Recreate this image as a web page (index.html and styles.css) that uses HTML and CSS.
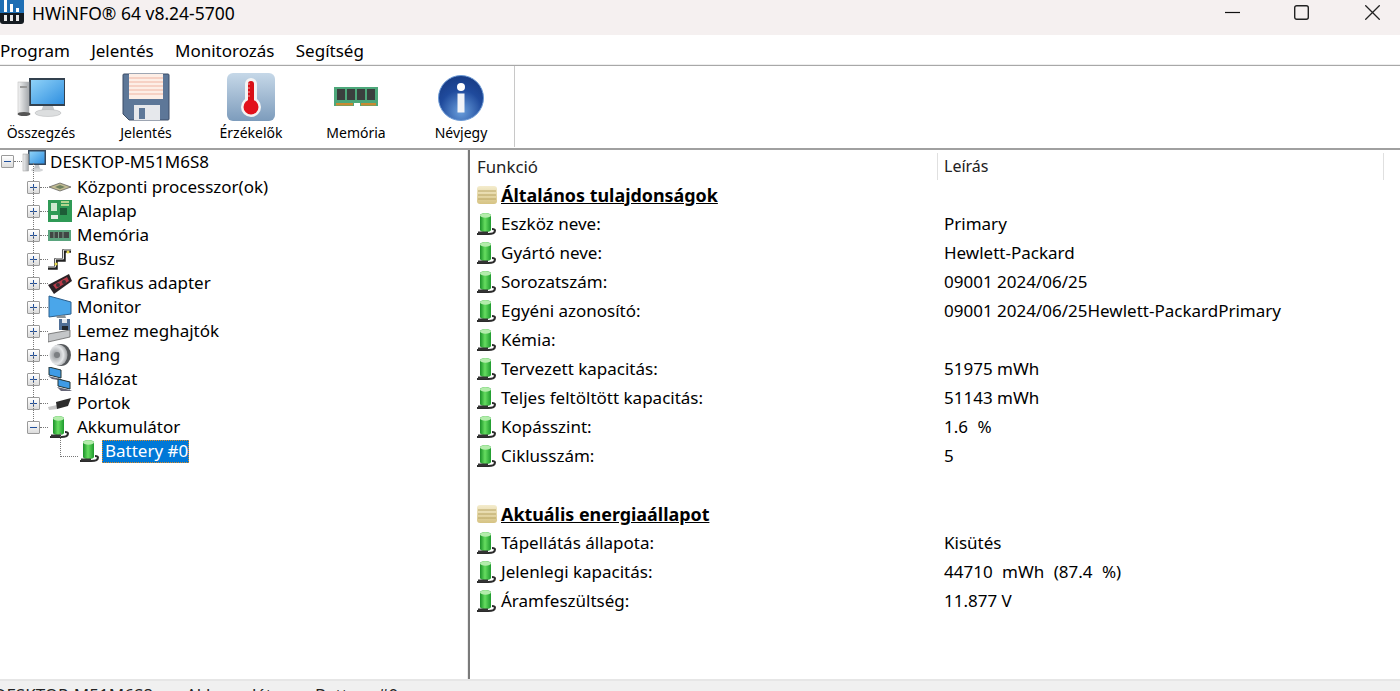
FILE: index.html
```html
<!DOCTYPE html>
<html lang="hu">
<head>
<meta charset="utf-8">
<title>HWiNFO 64</title>
<link rel="stylesheet" href="styles.css">
</head>
<body>
<svg class="defs" width="0" height="0" aria-hidden="true">
  <defs>
    <linearGradient id="gScreen" x1="0" y1="0" x2="1" y2="1"><stop offset="0" stop-color="#8fd2f8"/><stop offset="1" stop-color="#2f8fe0"/></linearGradient>
    <linearGradient id="gBat" x1="0" y1="0" x2="1" y2="0"><stop offset="0" stop-color="#1a9028"/><stop offset=".45" stop-color="#66dd60"/><stop offset="1" stop-color="#1e9a2e"/></linearGradient>
    <linearGradient id="gTower" x1="0" y1="0" x2="1" y2="0"><stop offset="0" stop-color="#f4f4f4"/><stop offset="1" stop-color="#a4a8ac"/></linearGradient>
    <linearGradient id="gTherm" x1="0" y1="0" x2="0" y2="1"><stop offset="0" stop-color="#c6d8e8"/><stop offset="1" stop-color="#7d9cbc"/></linearGradient>
    <radialGradient id="gInfo" cx=".5" cy=".8" r=".8"><stop offset="0" stop-color="#6a9fdc"/><stop offset=".6" stop-color="#1f4a9c"/><stop offset="1" stop-color="#173b84"/></radialGradient>
    <linearGradient id="gDoc" x1="0" y1="0" x2="0" y2="1"><stop offset="0" stop-color="#f4eccd"/><stop offset="1" stop-color="#d6c383"/></linearGradient>
    <radialGradient id="gCone" cx=".35" cy=".5" r=".7"><stop offset="0" stop-color="#8d9093"/><stop offset=".6" stop-color="#e4e6e8"/><stop offset="1" stop-color="#8a8d90"/></radialGradient>
    <symbol id="battery" viewBox="0 0 24 24">
      <path d="M5 3.500a5.500 2.500 0 0 1 11 0V18a5.500 2 0 0 1-11 0z" fill="url(#gBat)"/>
      <ellipse cx="10.500" cy="3.500" rx="5.500" ry="2.200" fill="#b4ecac"/>
      <path d="M2 22h11c4 0 7-.8 7-3.500 0-1-1-1.500-3-1.500" fill="none" stroke="#2b2b2b" stroke-width="2"/>
      <path d="M3 19.500h10v2.500H3z" fill="#333"/>
    </symbol>
    <symbol id="monitor" viewBox="0 0 24 24">
      <rect x="6" y="0" width="18" height="15" fill="#37475a"/>
      <rect x="7.500" y="1.500" width="15" height="12" fill="url(#gScreen)"/>
      <rect x="1" y="4" width="5.500" height="17" fill="url(#gTower)" stroke="#9a9a9a" stroke-width=".5"/>
      <path d="M13 15h4l1 4h-6z" fill="#bfc3c7"/>
      <ellipse cx="15" cy="20" rx="6" ry="1.800" fill="#d4d6d8"/>
    </symbol>
  </defs>
</svg>

<header class="titlebar">
  <svg class="app-logo" viewBox="0 0 24 24" aria-hidden="true">
    <path d="M0 0h24v21a3 3 0 0 1-3 3H3a3 3 0 0 1-3-3z" fill="#141a20"/>
    <path d="M0 0h24v13H0z" fill="#1f6fb4"/>
    <path d="M4 0h3v12H4zM10 4h3v8h-3zM16 8h3v4h-3z" fill="#fff"/>
    <path d="M4 15h3v6H4zM10 15h3v6h-3zM16 15h3v6h-3z" fill="#e8e8e8"/>
  </svg>
  <span class="app-title">HWiNFO® 64 v8.24-5700</span>
  <div class="win-controls">
    <svg class="win-btn" viewBox="0 0 15 15" aria-hidden="true"><path d="M0 7.500h15" stroke="#111" stroke-width="1.200"/></svg>
    <svg class="win-btn" viewBox="0 0 15 15" aria-hidden="true"><rect x=".7" y=".7" width="13.600" height="13.600" rx="2" fill="none" stroke="#222" stroke-width="1.400"/></svg>
    <svg class="win-btn" viewBox="0 0 15 15" aria-hidden="true"><path d="M.3.300l14.400 14.400M14.700.300L.3 14.700" stroke="#222" stroke-width="1.300"/></svg>
  </div>
</header>

<nav class="menubar">
  <span class="menu-item">Program</span>
  <span class="menu-item">Jelentés</span>
  <span class="menu-item">Monitorozás</span>
  <span class="menu-item">Segítség</span>
</nav>

<section class="toolbar">
  <div class="tools">
    <div class="tool">
      <svg class="tool-icon" viewBox="0 0 48 48" aria-hidden="true">
        <rect x="12" y="5" width="37" height="28" fill="#33414f"/>
        <rect x="14" y="7" width="33" height="24" fill="url(#gScreen)"/>
        <path d="M26 33h10l2 6H24z" fill="#c4c7ca"/>
        <ellipse cx="31" cy="40" rx="13" ry="3.500" fill="#dcdedf" stroke="#b0b2b4" stroke-width=".5"/>
        <rect x="1" y="9" width="11" height="31" fill="url(#gTower)" stroke="#b5b5b5" stroke-width=".5"/>
        <rect x="3" y="13" width="7" height="2" fill="#999"/>
        <ellipse cx="7" cy="41" rx="6.500" ry="2" fill="#555"/>
      </svg>
      <span class="tool-label">Összegzés</span>
    </div>
    <div class="tool">
      <svg class="tool-icon" viewBox="0 0 48 48" aria-hidden="true">
        <path d="M2 1h44a1 1 0 0 1 1 1v44a1 1 0 0 1-1 1H7l-6-6V2a1 1 0 0 1 1-1z" fill="#5d7798" stroke="#3c4d66"/>
        <rect x="7" y="1" width="34" height="25" fill="#fdeee6"/>
        <path d="M7 5h34M7 9h34M7 13h34M7 17h34M7 21h34" stroke="#efb4a2" stroke-width="1"/>
        <rect x="12" y="32" width="26" height="15" fill="#e6e8ec"/>
        <rect x="17" y="35" width="6" height="11" fill="#5d7798"/>
      </svg>
      <span class="tool-label">Jelentés</span>
    </div>
    <div class="tool">
      <svg class="tool-icon" viewBox="0 0 48 48" aria-hidden="true">
        <rect x="0" y="0" width="48" height="48" rx="6" fill="url(#gTherm)"/>
        <rect x="18" y="5" width="12" height="28" rx="6" fill="#f4f4f4"/>
        <circle cx="24" cy="34" r="10" fill="#f4f4f4"/>
        <rect x="21" y="8" width="6" height="26" rx="3" fill="#d80f16"/>
        <circle cx="24" cy="34" r="7.500" fill="#e2101a"/>
        <path d="M21 11h2M21 15h2M21 19h2M21 23h2" stroke="#f2a0a0" stroke-width="1"/>
      </svg>
      <span class="tool-label">Érzékelők</span>
    </div>
    <div class="tool">
      <svg class="tool-icon" viewBox="0 0 48 48" aria-hidden="true">
        <path d="M2 14h44v19H28v-3h-6v3H2z" fill="#4da77a"/>
        <rect x="5" y="16" width="8" height="11" fill="#3a3f3e"/>
        <rect x="15" y="16" width="8" height="11" fill="#3a3f3e"/>
        <rect x="25" y="16" width="8" height="11" fill="#3a3f3e"/>
        <rect x="35" y="16" width="8" height="11" fill="#3a3f3e"/>
        <rect x="4" y="30" width="17" height="2.500" fill="#c98a32"/>
        <rect x="29" y="30" width="15" height="2.500" fill="#c98a32"/>
      </svg>
      <span class="tool-label">Memória</span>
    </div>
    <div class="tool">
      <svg class="tool-icon" viewBox="0 0 48 48" aria-hidden="true">
        <circle cx="24" cy="25" r="22.500" fill="url(#gInfo)" stroke="#6d9bd6" stroke-width="1"/>
        <circle cx="24" cy="14" r="4" fill="#fff"/>
        <rect x="20.500" y="20.500" width="7" height="19" fill="#f2f4f8"/>
      </svg>
      <span class="tool-label">Névjegy</span>
    </div>
  </div>
</section>

<main class="panes">
  <aside class="tree">
    <div class="row root">
      <span class="toggle minus"></span><span class="dash"></span>
      <svg class="ico"><use href="#monitor"/></svg>
      <span class="node">DESKTOP-M51M6S8</span>
    </div>
    <div class="row child">
      <span class="toggle"></span><span class="dash"></span>
      <svg class="ico" viewBox="0 0 24 24" aria-hidden="true"><path d="M1 12l11-4 11 4-11 4z" fill="#c2bc94" stroke="#555" stroke-width=".7"/><path d="M7 12l5-2 5 2-5 2z" fill="#6f8060"/></svg>
      <span class="node">Központi processzor(ok)</span>
    </div>
    <div class="row child">
      <span class="toggle"></span><span class="dash"></span>
      <svg class="ico" viewBox="0 0 24 24" aria-hidden="true"><rect y="1" width="24" height="22" fill="#2f9a56"/><rect x="3" y="4" width="6" height="8" fill="#cfe8d0"/><rect x="12" y="9" width="7" height="7" fill="#1d5c37"/><rect x="3" y="16" width="7" height="4" fill="#e5efe5"/><path d="M13 3h8M13 6h8" stroke="#e0e8a0" stroke-width="1.500"/></svg>
      <span class="node">Alaplap</span>
    </div>
    <div class="row child">
      <span class="toggle"></span><span class="dash"></span>
      <svg class="ico" viewBox="0 0 24 24" aria-hidden="true"><rect y="7" width="23" height="11" fill="#5aa47e"/><rect x="2" y="9" width="19" height="6" fill="#404644"/><path d="M6 9v6M10.500 9v6M15 9v6" stroke="#7ea08e"/></svg>
      <span class="node">Memória</span>
    </div>
    <div class="row child">
      <span class="toggle"></span><span class="dash"></span>
      <svg class="ico" viewBox="0 0 24 24" aria-hidden="true"><path d="M0 21h8v-8h8V4h7" fill="none" stroke="#222" stroke-width="3.500"/><path d="M0 20h7.500v-8h8V3h8" fill="none" stroke="#e2e2e2" stroke-width="1"/><circle cx="8" cy="17" r="1.500" fill="#e8d84a"/><circle cx="20" cy="5" r="1.500" fill="#e8d84a"/></svg>
      <span class="node">Busz</span>
    </div>
    <div class="row child">
      <span class="toggle"></span><span class="dash"></span>
      <svg class="ico" viewBox="0 0 24 24" aria-hidden="true"><path d="M0 14L21 3l3 7L6 23z" fill="#2a2226"/><path d="M5 14l14-8 2 4L8 18z" fill="#b83a48"/><circle cx="10" cy="14" r="2" fill="#3a3034"/><circle cx="16" cy="11" r="2" fill="#3a3034"/></svg>
      <span class="node">Grafikus adapter</span>
    </div>
    <div class="row child">
      <span class="toggle"></span><span class="dash"></span>
      <svg class="ico" viewBox="0 0 24 24" aria-hidden="true"><path d="M1 1l22 6v12L1 22z" fill="#4aa6ea" stroke="#2c5f8c"/><path d="M8 21l9-1 1 3H9z" fill="#8a9298"/></svg>
      <span class="node">Monitor</span>
    </div>
    <div class="row child">
      <span class="toggle"></span><span class="dash"></span>
      <svg class="ico" viewBox="0 0 24 24" aria-hidden="true"><path d="M0 15l22-4v7L0 23z" fill="#c4c6c8" stroke="#555" stroke-width=".7"/><rect x="11" y="0" width="11" height="11" fill="#4f6e96"/><rect x="14" y="0" width="5" height="4" fill="#e4e8ee"/><rect x="14" y="7" width="6" height="4" fill="#20262e"/></svg>
      <span class="node">Lemez meghajtók</span>
    </div>
    <div class="row child">
      <span class="toggle"></span><span class="dash"></span>
      <svg class="ico" viewBox="0 0 24 24" aria-hidden="true"><ellipse cx="13" cy="12" rx="10" ry="11" fill="#55585b"/><ellipse cx="10.500" cy="12" rx="9" ry="10.500" fill="url(#gCone)"/><circle cx="9" cy="12" r="3" fill="#7c7f82"/></svg>
      <span class="node">Hang</span>
    </div>
    <div class="row child">
      <span class="toggle"></span><span class="dash"></span>
      <svg class="ico" viewBox="0 0 24 24" aria-hidden="true"><path d="M1 0l12 3v8L1 8z" fill="#3f9be6" stroke="#233"/><path d="M0 9l13 3 3 2-12-2z" fill="#667"/><path d="M10 12l12 3v7l-12-3z" fill="#3f9be6" stroke="#233"/><path d="M9 20l13 3 2 1H13z" fill="#667"/></svg>
      <span class="node">Hálózat</span>
    </div>
    <div class="row child">
      <span class="toggle"></span><span class="dash"></span>
      <svg class="ico" viewBox="0 0 24 24" aria-hidden="true"><path d="M0 16l9-2 1 4-9 1z" fill="#c8c8c8"/><path d="M8 11l15-4-3 8-11 3z" fill="#2c2c2c"/></svg>
      <span class="node">Portok</span>
    </div>
    <div class="row child">
      <span class="toggle minus"></span><span class="dash"></span>
      <svg class="ico"><use href="#battery"/></svg>
      <span class="node">Akkumulátor</span>
    </div>
    <div class="row grandchild">
      <span class="elbow"></span>
      <svg class="ico"><use href="#battery"/></svg>
      <span class="node selected">Battery #0</span>
    </div>
  </aside>

  <div class="splitter"></div>

  <section class="details">
    <div class="head">
      <span class="col-a">Funkció</span>
      <span class="col-b">Leírás</span>
    </div>
    <div class="line section"><svg class="ico2" viewBox="0 0 24 24" aria-hidden="true"><rect x="2" y="3" width="20" height="18" rx="3" fill="url(#gDoc)"/><path d="M3 8h18M3 12h18M3 16h18" stroke="#b8a462" stroke-width="1"/></svg><span class="col-a-text">Általános tulajdonságok</span></div>
    <div class="line"><svg class="ico2"><use href="#battery"/></svg><span class="col-a-text">Eszköz neve:</span><span class="val">Primary</span></div>
    <div class="line"><svg class="ico2"><use href="#battery"/></svg><span class="col-a-text">Gyártó neve:</span><span class="val">Hewlett-Packard</span></div>
    <div class="line"><svg class="ico2"><use href="#battery"/></svg><span class="col-a-text">Sorozatszám:</span><span class="val">09001 2024/06/25</span></div>
    <div class="line"><svg class="ico2"><use href="#battery"/></svg><span class="col-a-text">Egyéni azonosító:</span><span class="val">09001 2024/06/25Hewlett-PackardPrimary</span></div>
    <div class="line"><svg class="ico2"><use href="#battery"/></svg><span class="col-a-text">Kémia:</span><span class="val"></span></div>
    <div class="line"><svg class="ico2"><use href="#battery"/></svg><span class="col-a-text">Tervezett kapacitás:</span><span class="val">51975 mWh</span></div>
    <div class="line"><svg class="ico2"><use href="#battery"/></svg><span class="col-a-text">Teljes feltöltött kapacitás:</span><span class="val">51143 mWh</span></div>
    <div class="line"><svg class="ico2"><use href="#battery"/></svg><span class="col-a-text">Kopásszint:</span><span class="val val-wide">1.6 %</span></div>
    <div class="line"><svg class="ico2"><use href="#battery"/></svg><span class="col-a-text">Ciklusszám:</span><span class="val">5</span></div>
    <div class="line"></div>
    <div class="line section"><svg class="ico2" viewBox="0 0 24 24" aria-hidden="true"><rect x="2" y="3" width="20" height="18" rx="3" fill="url(#gDoc)"/><path d="M3 8h18M3 12h18M3 16h18" stroke="#b8a462" stroke-width="1"/></svg><span class="col-a-text">Aktuális energiaállapot</span></div>
    <div class="line"><svg class="ico2"><use href="#battery"/></svg><span class="col-a-text">Tápellátás állapota:</span><span class="val">Kisütés</span></div>
    <div class="line"><svg class="ico2"><use href="#battery"/></svg><span class="col-a-text">Jelenlegi kapacitás:</span><span class="val val-wide">44710 mWh (87.4 %)</span></div>
    <div class="line"><svg class="ico2"><use href="#battery"/></svg><span class="col-a-text">Áramfeszültség:</span><span class="val">11.877 V</span></div>
  </section>
</main>

<footer class="statusbar">
  <span class="st st-1">DESKTOP-M51M6S8</span>
  <span class="st st-2">Akkumulátor</span>
  <span class="st st-3">Battery #0</span>
</footer>
</body>
</html>
```
FILE: styles.css
```css
* { box-sizing: border-box; }
html, body { margin: 0; height: 691px; overflow: hidden; background: #fff; }
body {
  display: flex;
  flex-direction: column;
  width: 1400px;
  font-family: "Noto Sans", "Open Sans", sans-serif;
  font-size: 17px;
  color: #000;
}
.defs { position: absolute; }

.titlebar {
  flex: 0 0 35px;
  display: flex;
  align-items: center;
  background: #f5f0f0;
}
.app-logo { width: 24px; height: 24px; margin-top: -11px; flex: none; }
.app-title { margin-left: 8px; font-size: 17.500px; margin-top: -10px; }
.win-controls { margin-left: auto; display: flex; margin-top: -11px; padding-right: 20px; align-items: center; }
.win-btn { width: 15px; height: 15px; display: block; }
.win-btn + .win-btn { margin-left: 54px; }
.win-btn + .win-btn + .win-btn { margin-left: 56px; }

.menubar {
  flex: 0 0 31px;
  display: flex;
  align-items: center;
  gap: 21.300px;
  background: #fff;
  border-bottom: 1px solid #a8a8a8;
  box-shadow: inset 0 -1px 0 #eee;
}

.toolbar {
  flex: 0 0 84px;
  display: flex;
  background: #fff;
  border-bottom: 2px solid #a0a0a0;
}
.tools {
  width: 515px;
  display: flex;
  border-right: 1px solid #c8c8c8;
  margin-bottom: 1px;
}
.tool { width: 105px; flex: none; display: flex; flex-direction: column; align-items: center; padding-top: 7px; }
.tool:first-child { margin-left: -11.500px; }
.tool-icon { width: 48px; height: 48px; display: block; }
.tool-label { font-size: 14px; line-height: 18px; margin-top: 3px; white-space: nowrap; }

.panes {
  flex: 1 1 0;
  display: flex;
  min-height: 0;
  border-bottom: 2px solid #e6e6e6;
}
.tree { width: 468px; flex: none; border-right: 1px solid #ececec; }
.splitter { width: 3px; flex: none; background: #fff; border-left: 2px solid #7a7a7a; }

.row { height: 24px; display: flex; align-items: center; position: relative; }
.root { height: 25px; padding: 0 0 2px 1px; }
.child { padding-left: 27px; }
.child::before {
  content: "";
  position: absolute;
  left: 33px;
  top: -12px;
  height: 24px;
  border-left: 1px dotted #777;
}
.grandchild { padding-left: 60px; }
.toggle {
  position: relative;
  width: 13px;
  height: 13px;
  flex: none;
  border: 1px solid #9a9a9a;
  border-radius: 1px;
  background:
    linear-gradient(#1f4f9c, #1f4f9c) center / 7px 1px no-repeat,
    linear-gradient(#1f4f9c, #1f4f9c) center / 1px 7px no-repeat,
    linear-gradient(#fff, #dcdcdc);
}
.toggle.minus {
  background:
    linear-gradient(#1f4f9c, #1f4f9c) center / 7px 1px no-repeat,
    linear-gradient(#fff, #dcdcdc);
}
.dash { width: 8px; flex: none; border-top: 1px dotted #777; }
.elbow {
  width: 18px;
  height: 24px;
  flex: none;
  margin-top: -12px;
  border-left: 1px dotted #777;
  border-bottom: 1px dotted #777;
}
.ico { width: 24px; height: 24px; flex: none; margin-right: 5px; }
.root .ico { margin-right: 4px; }
.node { white-space: nowrap; line-height: 22px; }
.grandchild .ico { margin-right: 0; }
.selected {
  background: #0078d7;
  color: #fff;
  padding: 0 1px 0 3px;
  outline: 1px dotted #e08a20;
  outline-offset: -1px;
  height: 23px;
}

.details { flex: 1 1 auto; padding-left: 7px; min-width: 0; }
.head { display: flex; height: 30px; align-items: center; padding-top: 3px; }
.col-a { width: 460px; flex: none; color: #222; font-size: 16.800px; margin-left: -1px; }
.col-b {
  width: 447px;
  flex: none;
  padding-left: 6px;
  border-left: 1px solid #e0e0e0;
  border-right: 1px solid #e0e0e0;
  line-height: 27px;
  font-size: 16px;
  color: #222;
}
.line { height: 29px; display: flex; align-items: center; }
.ico2 { width: 24px; height: 24px; flex: none; margin-left: -3px; margin-right: 2px; }
.col-a-text { width: 443px; flex: none; white-space: nowrap; }
.val { white-space: nowrap; }
.val-wide { word-spacing: 5px; }
.section .col-a-text { font-weight: 700; text-decoration: underline; width: auto; font-size: 17.900px; }

.statusbar {
  flex: 0 0 10px;
  display: flex;
  background: #f0f0f0;
  overflow: hidden;
  line-height: 20px;
  color: #222;
  padding-top: 4px;
}
.st { white-space: nowrap; display: block; }
.st-1 { margin-left: -6px; width: 192px; }
.st-2 { width: 129px; }
```
